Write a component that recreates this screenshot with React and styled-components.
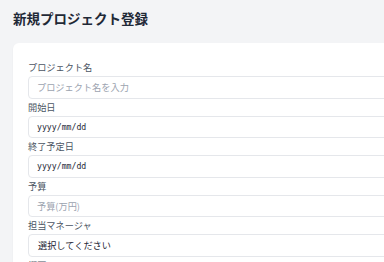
import React from 'react';
import styled, { createGlobalStyle } from 'styled-components';

const GlobalStyle = createGlobalStyle`
  html, body {
    margin: 0;
    padding: 0;
    background: #f3f4f6;
    overflow: hidden;
    font-family: "Noto Sans CJK JP", "Noto Sans", sans-serif;
  }
`;

const Page = styled.div`
  padding: 6px 0 0 13px;
  width: 720px;
`;

const Title = styled.h1`
  margin: 0 0 13px;
  font-size: 13.5px;
  line-height: 24px;
  font-weight: 700;
  color: #1f2937;
`;

const Card = styled.form`
  background: #ffffff;
  border-radius: 6px;
  box-shadow: 0 1px 2px rgba(0, 0, 0, 0.06);
  padding: 16px 15px;
  display: flex;
  flex-direction: column;
`;

const Label = styled.label`
  display: block;
  font-size: 9.2px;
  line-height: 17px;
  color: #4b5563;
`;

const Field = styled.div`
  box-sizing: border-box;
  height: 22.5px;
  border: 1px solid #e5e7eb;
  border-radius: 4px;
  background: #ffffff;
  display: flex;
  align-items: center;
  padding-left: ${(p) => (p.$select ? 9 : 8)}px;
  font-size: 9.2px;
  color: ${(p) => (p.$placeholder ? '#9ca3af' : '#1f2937')};
`;

const DateText = styled.span`
  font-family: "DejaVu Sans Mono", "Liberation Mono", monospace;
  font-size: 8.2px;
  color: #1f2937;
`;

const fields = [
  { label: 'プロジェクト名', text: 'プロジェクト名を入力', kind: 'placeholder' },
  { label: '開始日', text: 'yyyy/mm/dd', kind: 'date' },
  { label: '終了予定日', text: 'yyyy/mm/dd', kind: 'date' },
  { label: '予算', text: '予算(万円)', kind: 'placeholder' },
  { label: '担当マネージャ', text: '選択してください', kind: 'select' },
];

export default function App() {
  return (
    <>
      <GlobalStyle />
      <Page>
        <Title>新規プロジェクト登録</Title>
        <Card>
          {fields.map((f) => (
            <div key={f.label}>
              <Label>{f.label}</Label>
              <Field $placeholder={f.kind === 'placeholder'} $select={f.kind === 'select'}>
                {f.kind === 'date' ? <DateText>{f.text}</DateText> : f.text}
              </Field>
            </div>
          ))}
          <Label>概要メモ</Label>
        </Card>
      </Page>
    </>
  );
}
